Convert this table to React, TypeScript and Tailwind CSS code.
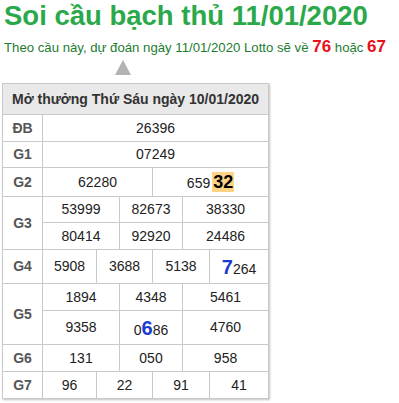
import React from "react";

const cellB = "border border-[#c9c9c9]";
const num = `${cellB} text-center text-[14px] text-[#222]`;
const lbl = `${cellB} text-center text-[14px] font-bold text-[#555]`;

export default function App() {
  return (
    <div className="w-[399px] h-[403px] bg-white overflow-hidden" style={{ fontFamily: '"Liberation Sans", Arial, sans-serif' }}>
      <div className="pl-[4px] text-[27.5px] leading-[32px] font-bold text-[#2ba94a]">Soi cầu bạch thủ 11/01/2020</div>
      <div className="pl-[4px] mt-[5px] text-[13.2px] leading-[20px] text-[#1d7d2f] whitespace-nowrap">
        Theo cầu này, dự đoán ngày 11/01/2020 Lotto sẽ về{" "}
        <span className="text-[17px] font-bold text-[#e8101a]">76</span> hoặc{" "}
        <span className="text-[17px] font-bold text-[#e8101a]">67</span>
      </div>
      <div className="flex pl-[115px] mt-[2px]">
        <div className="w-0 h-0 border-l-[8px] border-r-[8px] border-b-[15px] border-l-transparent border-r-transparent border-b-[#b3b3b3]" />
      </div>
      <div className="pl-[2px] mt-[8px]">
        <table className="border-collapse table-fixed w-[266px] shadow-[1px_1px_2px_rgba(0,0,0,0.25)]">
          <colgroup>
            <col className="w-[40px]" />
            <col className="w-[54px]" />
            <col className="w-[23px]" />
            <col className="w-[33px]" />
            <col className="w-[30px]" />
            <col className="w-[27px]" />
            <col className="w-[59px]" />
          </colgroup>
          <tbody>
            <tr className="h-[31px] bg-[#e9e9e9]">
              <td colSpan={7} className={`${cellB} text-center text-[14px] font-bold text-[#333] whitespace-nowrap`}>
                Mở thưởng Thứ Sáu ngày 10/01/2020
              </td>
            </tr>
            <tr className="h-[27px]">
              <td className={lbl}>ĐB</td>
              <td colSpan={6} className={num}>26396</td>
            </tr>
            <tr className="h-[26px]">
              <td className={lbl}>G1</td>
              <td colSpan={6} className={num}>07249</td>
            </tr>
            <tr className="h-[29px]">
              <td className={lbl}>G2</td>
              <td colSpan={3} className={num}>62280</td>
              <td colSpan={3} className={num}>
                659<span className="ml-[2px] px-[1px] bg-[#fdd485] text-[18px] font-bold text-black">32</span>
              </td>
            </tr>
            <tr className="h-[26px]">
              <td rowSpan={2} className={lbl}>G3</td>
              <td colSpan={2} className={num}>53999</td>
              <td colSpan={2} className={num}>82673</td>
              <td colSpan={2} className={num}>38330</td>
            </tr>
            <tr className="h-[27px]">
              <td colSpan={2} className={num}>80414</td>
              <td colSpan={2} className={num}>92920</td>
              <td colSpan={2} className={num}>24486</td>
            </tr>
            <tr className="h-[34px]">
              <td className={lbl}>G4</td>
              <td className={num}>5908</td>
              <td colSpan={2} className={num}>3688</td>
              <td colSpan={2} className={num}>5138</td>
              <td className={num}>
                <span className="text-[20px] font-bold text-[#1a3ccf]">7</span>264
              </td>
            </tr>
            <tr className="h-[27px]">
              <td rowSpan={2} className={lbl}>G5</td>
              <td colSpan={2} className={num}>1894</td>
              <td colSpan={2} className={num}>4348</td>
              <td colSpan={2} className={num}>5461</td>
            </tr>
            <tr className="h-[34px]">
              <td colSpan={2} className={num}>9358</td>
              <td colSpan={2} className={num}>
                0<span className="text-[20px] font-bold text-[#1a3ccf]">6</span>86
              </td>
              <td colSpan={2} className={num}>4760</td>
            </tr>
            <tr className="h-[27px]">
              <td className={lbl}>G6</td>
              <td colSpan={2} className={num}>131</td>
              <td colSpan={2} className={num}>050</td>
              <td colSpan={2} className={num}>958</td>
            </tr>
            <tr className="h-[27px]">
              <td className={lbl}>G7</td>
              <td className={num}>96</td>
              <td colSpan={2} className={num}>22</td>
              <td colSpan={2} className={num}>91</td>
              <td className={num}>41</td>
            </tr>
          </tbody>
        </table>
      </div>
    </div>
  );
}
